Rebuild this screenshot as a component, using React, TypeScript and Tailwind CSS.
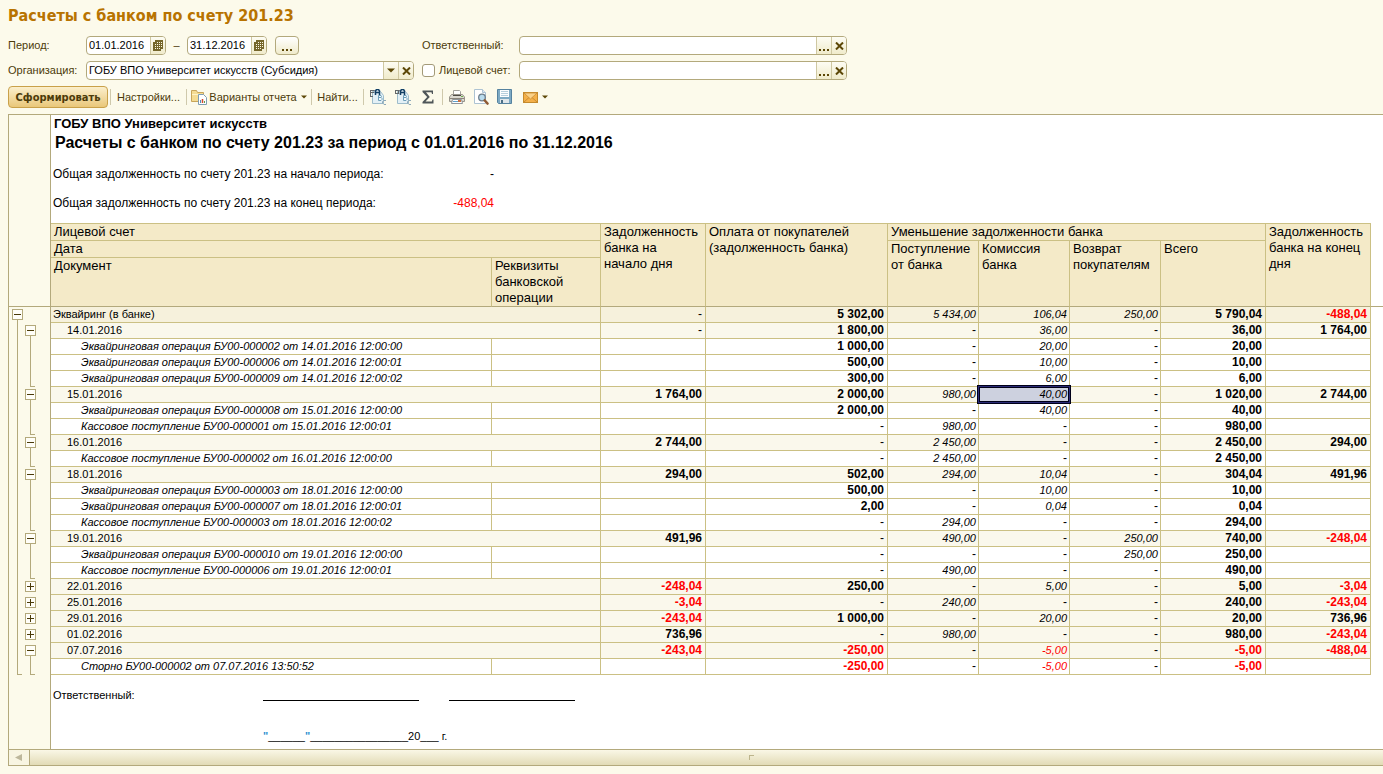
import type { ReactNode } from "react";

type Level = 0 | 1 | 2;

type Row = {
  level: Level;
  name: string;
  values: string[]; // start, payment, income, fee, refund, total, end
  collapsed?: boolean;
  last?: boolean;
  selected?: number;
};

const rows: Row[] = [
  { level: 0, name: "Эквайринг (в банке)", values: ["-", "5 302,00", "5 434,00", "106,04", "250,00", "5 790,04", "-488,04"] },
  { level: 1, name: "14.01.2016", values: ["-", "1 800,00", "-", "36,00", "-", "36,00", "1 764,00"] },
  { level: 2, name: "Эквайринговая операция БУ00-000002 от 14.01.2016 12:00:00", values: ["", "1 000,00", "-", "20,00", "-", "20,00", ""] },
  { level: 2, name: "Эквайринговая операция БУ00-000006 от 14.01.2016 12:00:01", values: ["", "500,00", "-", "10,00", "-", "10,00", ""] },
  { level: 2, name: "Эквайринговая операция БУ00-000009 от 14.01.2016 12:00:02", values: ["", "300,00", "-", "6,00", "-", "6,00", ""], last: true },
  { level: 1, name: "15.01.2016", values: ["1 764,00", "2 000,00", "980,00", "40,00", "-", "1 020,00", "2 744,00"], selected: 3 },
  { level: 2, name: "Эквайринговая операция БУ00-000008 от 15.01.2016 12:00:00", values: ["", "2 000,00", "-", "40,00", "-", "40,00", ""] },
  { level: 2, name: "Кассовое поступление БУ00-000001 от 15.01.2016 12:00:01", values: ["", "-", "980,00", "-", "-", "980,00", ""], last: true },
  { level: 1, name: "16.01.2016", values: ["2 744,00", "-", "2 450,00", "-", "-", "2 450,00", "294,00"] },
  { level: 2, name: "Кассовое поступление БУ00-000002 от 16.01.2016 12:00:00", values: ["", "-", "2 450,00", "-", "-", "2 450,00", ""], last: true },
  { level: 1, name: "18.01.2016", values: ["294,00", "502,00", "294,00", "10,04", "-", "304,04", "491,96"] },
  { level: 2, name: "Эквайринговая операция БУ00-000003 от 18.01.2016 12:00:00", values: ["", "500,00", "-", "10,00", "-", "10,00", ""] },
  { level: 2, name: "Эквайринговая операция БУ00-000007 от 18.01.2016 12:00:01", values: ["", "2,00", "-", "0,04", "-", "0,04", ""] },
  { level: 2, name: "Кассовое поступление БУ00-000003 от 18.01.2016 12:00:02", values: ["", "-", "294,00", "-", "-", "294,00", ""], last: true },
  { level: 1, name: "19.01.2016", values: ["491,96", "-", "490,00", "-", "250,00", "740,00", "-248,04"] },
  { level: 2, name: "Эквайринговая операция БУ00-000010 от 19.01.2016 12:00:00", values: ["", "-", "-", "-", "250,00", "250,00", ""] },
  { level: 2, name: "Кассовое поступление БУ00-000006 от 19.01.2016 12:00:01", values: ["", "-", "490,00", "-", "-", "490,00", ""], last: true },
  { level: 1, name: "22.01.2016", values: ["-248,04", "250,00", "-", "5,00", "-", "5,00", "-3,04"], collapsed: true },
  { level: 1, name: "25.01.2016", values: ["-3,04", "-", "240,00", "-", "-", "240,00", "-243,04"], collapsed: true },
  { level: 1, name: "29.01.2016", values: ["-243,04", "1 000,00", "-", "20,00", "-", "20,00", "736,96"], collapsed: true },
  { level: 1, name: "01.02.2016", values: ["736,96", "-", "980,00", "-", "-", "980,00", "-243,04"], collapsed: true },
  { level: 1, name: "07.07.2016", values: ["-243,04", "-250,00", "-", "-5,00", "-", "-5,00", "-488,04"] },
  { level: 2, name: "Сторно БУ00-000002 от 07.07.2016 13:50:52", values: ["", "-250,00", "-", "-5,00", "-", "-5,00", ""], last: true },
];

const rowBg = ["bg-[#f6f1dc]", "bg-[#faf8ec]", "bg-white"];
const rowIndent = ["pl-0.5", "pl-4", "pl-[30px] italic"];
const line = "border-[#cbc084]";
const italicColumns = [2, 3, 4];

/* Toolbar icons */

function SortIcon({ grid }: { grid?: boolean }) {
  return (
    <svg width="16" height="16" viewBox="0 0 16 16" aria-hidden="true">
      <path d="M2.5 2.5h8l3 4v8h-11z" fill="#e3f0f6" stroke="#9dbccb" />
      <path
        d={grid ? "M0 1.5h6M0 4.5h5M0.5 1v4M3.5 1v4" : "M0 1.5h6M0 3.5h5M0.5 1v7M1 7.5h2"}
        stroke="#63676a"
        fill="none"
      />
      <path d="M5 0h5l1 6H4z" fill="#e3f0f6" />
      <path d="M5.5 6V2l1-1.500h2l1 1.500v4M5.500 3.500h4" stroke="#123f63" strokeWidth="1.500" fill="none" />
      <path d="M8.500 6.500v5h2.500l1-1v-1l-1-1 .5-1-.5-1zM8.500 8.500h2.500" stroke="#6d9fba" fill="#f4fafc" />
      <path d="M16 11.500h-2l-1.500 1v1.500l1.500 1.500h2" stroke="#8fa9b8" fill="none" />
    </svg>
  );
}

function PrinterIcon() {
  return (
    <svg width="16" height="16" viewBox="0 0 16 16" aria-hidden="true">
      <path d="M4.500 7V1.500h6l1 1V7" fill="#fff" stroke="#a3a19a" />
      <path d="M2.500 5.500h11l2 2.500v4.500h-15V8z" fill="#dcd9d0" stroke="#98948a" />
      <path d="M4 6.500h8" stroke="#4e4b45" />
      <path d="M1 9.500h14" stroke="#8a857b" />
      <path d="M3.500 10.500h9l1 4h-11z" fill="#fff" stroke="#8f9499" />
      <path d="M4 12.500h5" stroke="#5f9fc8" />
      <rect x="9" y="11" width="3" height="2" fill="#c9703f" />
      <rect x="12" y="7" width="2" height="1" fill="#6bb04c" />
    </svg>
  );
}

function PreviewIcon() {
  return (
    <svg width="16" height="16" viewBox="0 0 16 16" aria-hidden="true">
      <path d="M1.500 0.500h8l3 3v11h-11z" fill="#fff" stroke="#adc3d3" />
      <path d="M9.500 0.500v3h3" fill="#dce8f1" stroke="#adc3d3" />
      <circle cx="9" cy="8.500" r="3.300" fill="#b9dcee" stroke="#6c7d8b" strokeWidth="1.300" />
      <path d="M11.800 11.500l2.700 3" stroke="#8f5b34" strokeWidth="2.600" strokeLinecap="round" />
    </svg>
  );
}

function SaveIcon() {
  return (
    <svg width="16" height="16" viewBox="0 0 16 16" aria-hidden="true">
      <path d="M0.500 0.500h14v14h-13l-1-1z" fill="#7da9c3" stroke="#55829f" />
      <rect x="3" y="1" width="9" height="7" fill="#fbfdfe" />
      <path d="M4 2.500h7M4 4.500h7M4 6.500h7" stroke="#b5cedc" />
      <rect x="3" y="10" width="9" height="4" fill="#dfe6ea" />
      <rect x="4" y="11" width="2" height="3" fill="#4b6f86" />
    </svg>
  );
}

function MailIcon() {
  return (
    <svg width="15" height="11" viewBox="0 0 15 11" aria-hidden="true">
      <rect x="0.500" y="0.500" width="14" height="10" fill="#f4b04a" stroke="#c58a2c" />
      <path d="M1 10l5-4.500M14 10L9 5.500" fill="none" stroke="#c98d33" />
      <path d="M1 1l6.500 6L14 1z" fill="#fad28a" stroke="#c98d33" strokeWidth="0.800" />
    </svg>
  );
}

function FolderIcon() {
  return (
    <svg width="16" height="16" viewBox="0 0 16 16" aria-hidden="true">
      <path d="M0.500 12.500v-11h5l1 2h6v9z" fill="#f5dc93" stroke="#c8a559" />
      <path d="M1 5.500h11" stroke="#fff3c8" />
      <path d="M7.500 5.500h5l3 3v7h-8z" fill="#fff" stroke="#7f9db3" />
      <path d="M9.500 14v-3" stroke="#4d8fc1" />
      <path d="M11.500 14v-4" stroke="#d24a2c" strokeWidth="1.500" />
      <path d="M13.500 14v-2" stroke="#5aa14b" />
    </svg>
  );
}

// stack of calendar sheets
function CalendarIcon() {
  return (
    <svg width="10" height="11" viewBox="0 0 10 11" shapeRendering="crispEdges" aria-hidden="true">
      <path d="M2 0h8v9h-2v2h-8v-9h2z" fill="#75662b" />
      <path
        d="M4 2h1v1h-1zM6 2h1v1h-1zM8 2h1v1h-1zM2 4h1v1h-1zM4 4h1v1h-1zM6 4h1v1h-1zM8 4h1v1h-1zM2 6h1v1h-1zM4 6h1v1h-1zM6 6h1v1h-1zM8 6h1v1h-1zM2 8h1v1h-1zM4 8h1v1h-1zM6 8h1v1h-1z"
        fill="#fbf8e4"
      />
    </svg>
  );
}

function Caret() {
  return (
    <svg width="6" height="4" viewBox="0 0 6 4" aria-hidden="true">
      <path d="M0 0.500h6L3 3.500z" fill="#5c4706" />
    </svg>
  );
}

function CrossIcon() {
  return (
    <svg width="9" height="8" viewBox="0 0 9 8" aria-hidden="true">
      <path d="M1 0.500l7 7M8 0.500l-7 7" stroke="#5c4706" strokeWidth="2" />
    </svg>
  );
}

function Dots() {
  return (
    <svg width="10" height="2" viewBox="0 0 10 2" shapeRendering="crispEdges" aria-hidden="true">
      <path d="M0 0h2v2h-2zM4 0h2v2h-2zM8 0h2v2h-2z" fill="#5c4706" />
    </svg>
  );
}

/* Form parts */

const fieldBox =
  "flex h-[19px] overflow-hidden rounded-[4px] border border-[#b3a97c] bg-white text-black";
const fieldButton =
  "flex w-[15px] shrink-0 items-center justify-center border-l border-[#cfc8a2] bg-linear-to-b from-[#fdfcf3] to-[#f0ebcb]";

function DateField({ id, label, value }: { id: string; label: string; value: string }) {
  return (
    <div className={`${fieldBox} w-20`}>
      <input id={id} aria-label={label} defaultValue={value} className="w-full min-w-0 pl-0.5 outline-none" />
      <button type="button" aria-label="Календарь" className={fieldButton}>
        <CalendarIcon />
      </button>
    </div>
  );
}

function LookupField({ id, label }: { id: string; label: string }) {
  return (
    <div className={`${fieldBox} w-82`}>
      <input id={id} aria-label={label} className="w-full min-w-0 pl-0.5 outline-none" />
      <button type="button" aria-label="Выбрать" className={`${fieldButton} pt-2`}>
        <Dots />
      </button>
      <button type="button" aria-label="Очистить" className={fieldButton}>
        <CrossIcon />
      </button>
    </div>
  );
}

function Separator() {
  return <div className="h-4 w-px bg-[#cfc9ac]" />;
}

function ToolButton({ label, children }: { label: string; children: ReactNode }) {
  return (
    <button type="button" aria-label={label} className="flex h-5 min-w-4 items-center justify-center gap-1">
      {children}
    </button>
  );
}

/* Group tree in the gutter */

function Toggle({ collapsed }: { collapsed?: boolean }) {
  return (
    <button type="button" aria-label={collapsed ? "Развернуть" : "Свернуть"} className="block h-4 w-[13px]">
      <svg width="13" height="16" viewBox="0 0 13 16" shapeRendering="crispEdges" aria-hidden="true">
        <rect x="1.500" y="2.500" width="10" height="10" fill="#fffef8" stroke="#b3a97c" />
        <path d={collapsed ? "M3 7.500h7M6.500 4v7" : "M3 7.500h7"} stroke="#4a3a08" />
        {!collapsed && <path d="M6.500 13v3" stroke="#b3a97c" />}
      </svg>
    </button>
  );
}

function Branch({ end }: { end?: boolean }) {
  return (
    <svg width="13" height="16" viewBox="0 0 13 16" shapeRendering="crispEdges" className="block" aria-hidden="true">
      <path d={end ? "M6.500 0v15.500h4.500" : "M6.500 0v16"} fill="none" stroke="#b3a97c" />
    </svg>
  );
}

function ReportRow({ row, end }: { row: Row; end: boolean }) {
  const bg = rowBg[row.level];
  return (
    <tr className="h-4">
      <td className="border-r border-[#b3a97c] bg-[#fcfaeb] p-0 pl-0.5">
        <div className="flex h-4">
          {row.level === 0 ? <Toggle /> : <Branch end={end} />}
          {row.level === 1 && <Toggle collapsed={row.collapsed} />}
          {row.level === 2 && <Branch end={row.last} />}
        </div>
      </td>
      <td
        colSpan={row.level === 2 ? 1 : 2}
        className={`border-r border-b p-0 whitespace-nowrap ${line} ${bg} ${rowIndent[row.level]}`}
      >
        {row.name}
      </td>
      {row.level === 2 && <td className={`border-r border-b p-0 ${line} ${bg}`} />}
      {row.values.map((value, i) => {
        const italic = italicColumns.includes(i);
        const font = value === "-" ? "text-xs leading-[15px]" : italic ? "italic" : "text-xs leading-[15px] font-bold";
        const color = value.length > 1 && value.startsWith("-") ? "text-[#f00]" : "";
        const selected = row.selected === i;
        return (
          <td
            key={i}
            className={`relative border-r border-b p-0 text-right ${line} ${italic ? "pr-0.5" : "pr-[3px]"} ${
              selected ? "bg-[#cdd1df]" : bg
            } ${font} ${color}`}
          >
            {value}
            {selected && (
              <span className="absolute -inset-0.5 z-10 border border-[#000018] shadow-[inset_0_0_0_1px_#2b2b78,inset_0_0_0_2px_#000018]" />
            )}
          </td>
        );
      })}
      <td className="p-0" />
    </tr>
  );
}

type HeadCellProps = {
  children: ReactNode;
  colSpan?: number;
  rowSpan?: number;
  strong?: boolean;
};

function HeadCell({ children, colSpan, rowSpan, strong }: HeadCellProps) {
  return (
    <th
      colSpan={colSpan}
      rowSpan={rowSpan}
      className={`border-r border-b border-r-[#cbc084] bg-[#f4eac8] p-0 pr-1 pl-[3px] text-left align-top font-normal ${
        strong ? "border-b-[#b3a97c]" : "border-b-[#cbc084]"
      }`}
    >
      {children}
    </th>
  );
}

export default function App() {
  return (
    <main className="min-h-screen overflow-x-hidden bg-[#fcfaeb] pl-2 font-['Liberation_Sans',Arial,sans-serif] text-[11px] leading-[15px] text-[#4c3b0a]">
      <h1 className="pt-1 font-['DejaVu_Sans_Condensed','DejaVu_Sans',sans-serif] text-base leading-6 font-bold text-[#b87300]">
        Расчеты с банком по счету 201.23
      </h1>

      <div className="mt-2 flex gap-2">
        <div className="grid grid-cols-[78px_328px] items-center gap-y-1.5">
          <label htmlFor="from">Период:</label>
          <div className="flex items-center">
            <DateField id="from" label="Период с" value="01.01.2016" />
            <span className="w-[21px] text-center">–</span>
            <DateField id="to" label="Период по" value="31.12.2016" />
            <button
              type="button"
              aria-label="Выбрать период"
              className="ml-2 flex h-[19px] w-6 items-center justify-center rounded-[4px] border border-[#b3a97c] bg-linear-to-b from-white to-[#f0ebcb] pt-2"
            >
              <Dots />
            </button>
          </div>

          <label htmlFor="org">Организация:</label>
          <div className={fieldBox}>
            <div className="relative flex flex-1">
              <select id="org" className="w-full appearance-none pl-0.5 outline-none">
                <option>ГОБУ ВПО Университет искусств (Субсидия)</option>
              </select>
              <span className={`${fieldButton} pointer-events-none absolute inset-y-0 right-0`}>
                <svg width="8" height="5" viewBox="0 0 8 5" aria-hidden="true">
                  <path d="M0 0.500h8L4 4.500z" fill="#5c4706" />
                </svg>
              </span>
            </div>
            <button type="button" aria-label="Очистить" className={fieldButton}>
              <CrossIcon />
            </button>
          </div>
        </div>

        <div className="grid grid-cols-[97px_328px] items-center gap-y-1.5">
          <label htmlFor="person">Ответственный:</label>
          <LookupField id="person" label="Ответственный" />
          <label className="flex items-center gap-1">
            <input
              type="checkbox"
              className="size-[13px] appearance-none rounded-[3px] border border-[#a39a78] bg-white checked:bg-[#b3a97c]"
            />
            Лицевой счет:
          </label>
          <LookupField id="account" label="Лицевой счет" />
        </div>
      </div>

      {/* Toolbar */}
      <div className="mt-1.5 mb-1.5 flex h-[22px] items-center">
        <button
          type="button"
          className="mr-0.5 h-[22px] w-[100px] rounded-[4px] border border-[#c9a14a] bg-linear-to-b from-[#fbefcc] to-[#e9c779] font-['DejaVu_Sans_Condensed','DejaVu_Sans',sans-serif] font-bold"
        >
          Сформировать
        </button>
        <Separator />
        <button type="button" className="w-[75px]">Настройки...</button>
        <Separator />
        <button type="button" className="flex w-31 items-center justify-center gap-0.5">
          <FolderIcon />
          <span className="mr-0.5">Варианты отчета</span>
          <Caret />
        </button>
        <Separator />
        <button type="button" className="w-[51px]">Найти...</button>
        <Separator />
        <div className="flex items-center gap-[9px] px-1.5">
          <ToolButton label="Сортировка по возрастанию">
            <SortIcon />
          </ToolButton>
          <ToolButton label="Сортировка по убыванию">
            <SortIcon grid />
          </ToolButton>
          <ToolButton label="Сумма">
            <svg width="12" height="14" viewBox="0 0 12 14" aria-hidden="true">
              <path d="M0.500 0.500H11V4H10L9.500 2.300H4L7.800 7L3.500 11.500H9.800L10.500 9.500H11.500V13.500H0.500V12L5.200 7L0.500 2Z" fill="#4f5659" />
            </svg>
          </ToolButton>
        </div>
        <Separator />
        <div className="flex items-center gap-2 px-1.5">
          <ToolButton label="Печать">
            <PrinterIcon />
          </ToolButton>
          <ToolButton label="Просмотр">
            <PreviewIcon />
          </ToolButton>
          <ToolButton label="Сохранить">
            <SaveIcon />
          </ToolButton>
          <div className="pl-0.5">
            <ToolButton label="Отправить">
              <MailIcon />
              <Caret />
            </ToolButton>
          </div>
        </div>
      </div>

      {/* Report */}
      <div className="border-t border-l border-[#b3a97c] bg-white text-black">
        <div className="flex">
          <div className="w-[42px] shrink-0 border-r border-[#b3a97c] bg-[#fcfaeb]" />
          <div className="pb-3 pl-0.5 text-xs leading-4">
            <p className="pl-px text-[13px] leading-[18px] font-bold">ГОБУ ВПО Университет искусств</p>
            <h2 className="pl-0.5 text-base leading-5 font-bold">
              Расчеты с банком по счету 201.23 за период с 01.01.2016 по 31.12.2016
            </h2>
            <dl className="grid w-[441px] grid-cols-[1fr_auto] gap-y-[13px] pt-[13px]">
              <dt>Общая задолженность по счету 201.23 на начало периода:</dt>
              <dd className="text-right">-</dd>
              <dt>Общая задолженность по счету 201.23 на конец периода:</dt>
              <dd className="text-right text-[#f00]">-488,04</dd>
            </dl>
          </div>
        </div>

        <table className="w-full min-w-[1362px] table-fixed border-separate border-spacing-0">
          <colgroup>
            <col className="w-[42px]" />
            <col className="w-[441px]" />
            <col className="w-[109px]" />
            <col className="w-[105px]" />
            <col className="w-[182px]" />
            <col className="w-[91px]" />
            <col className="w-[91px]" />
            <col className="w-[91px]" />
            <col className="w-[105px]" />
            <col className="w-[105px]" />
            <col />
          </colgroup>
          <thead className="text-[13px] leading-4">
            <tr className="h-px">
              <td className="border-r border-[#b3a97c] bg-[#fcfaeb] p-0" />
              <td colSpan={9} className="h-px bg-[#cbc084] p-0" />
              <td className="p-0" />
            </tr>
            <tr>
              <td rowSpan={3} className="border-r border-b border-[#b3a97c] bg-[#fcfaeb] p-0" />
              <HeadCell colSpan={2}>Лицевой счет</HeadCell>
              <HeadCell rowSpan={3} strong>Задолженность банка на начало дня</HeadCell>
              <HeadCell rowSpan={3} strong>Оплата от покупателей (задолженность банка)</HeadCell>
              <HeadCell colSpan={4}>Уменьшение задолженности банка</HeadCell>
              <HeadCell rowSpan={3} strong>Задолженность банка на конец дня</HeadCell>
              <td rowSpan={3} className="border-b border-[#b3a97c] p-0" />
            </tr>
            <tr>
              <HeadCell colSpan={2}>Дата</HeadCell>
              <HeadCell rowSpan={2} strong>Поступление от банка</HeadCell>
              <HeadCell rowSpan={2} strong>Комиссия банка</HeadCell>
              <HeadCell rowSpan={2} strong>Возврат покупателям</HeadCell>
              <HeadCell rowSpan={2} strong>Всего</HeadCell>
            </tr>
            <tr>
              <HeadCell strong>Документ</HeadCell>
              <HeadCell strong>Реквизиты банковской операции</HeadCell>
            </tr>
          </thead>
          <tbody>
            {rows.map((row, i) => (
              <ReportRow key={i} row={row} end={i === rows.length - 1} />
            ))}
          </tbody>
        </table>

        <div className="flex">
          <div className="w-[42px] shrink-0 border-r border-[#b3a97c] bg-[#fcfaeb]" />
          <div className="pt-3 pb-[5px] pl-0.5 leading-4">
            <div className="flex">
              <span className="w-[210px]">Ответственный:</span>
              <span className="mr-[30px] mb-0.5 w-39 border-b border-black" />
              <span className="mb-0.5 w-[126px] border-b border-black" />
            </div>
            <p className="mt-[25px] pl-[210px]">
              <span className="font-bold text-[#2f8fd0]">"</span>______<span className="font-bold text-[#2f8fd0]">"</span>
              ________________20___ г.
            </p>
          </div>
        </div>

        {/* Horizontal scroll bar */}
        <div className="flex h-[17px] border-y border-[#b3a97c] bg-linear-to-b from-[#faf7e6] to-[#e2dbb6]">
          <button
            type="button"
            aria-label="Прокрутить влево"
            className="flex w-[21px] items-center justify-center border-r border-[#b3a97c] bg-[#f8f5e2]"
          >
            <svg width="8" height="7" viewBox="0 0 8 7" aria-hidden="true">
              <path d="M0 3.500L7 0v7z" fill="#bdb79b" />
            </svg>
          </button>
          <div className="flex flex-1 items-center justify-center pl-[90px]">
            <svg width="5" height="5" viewBox="0 0 5 5" shapeRendering="crispEdges" aria-hidden="true">
              <path d="M0.500 5V0.500h4" fill="none" stroke="#bdb58c" />
            </svg>
          </div>
        </div>
      </div>
    </main>
  );
}
